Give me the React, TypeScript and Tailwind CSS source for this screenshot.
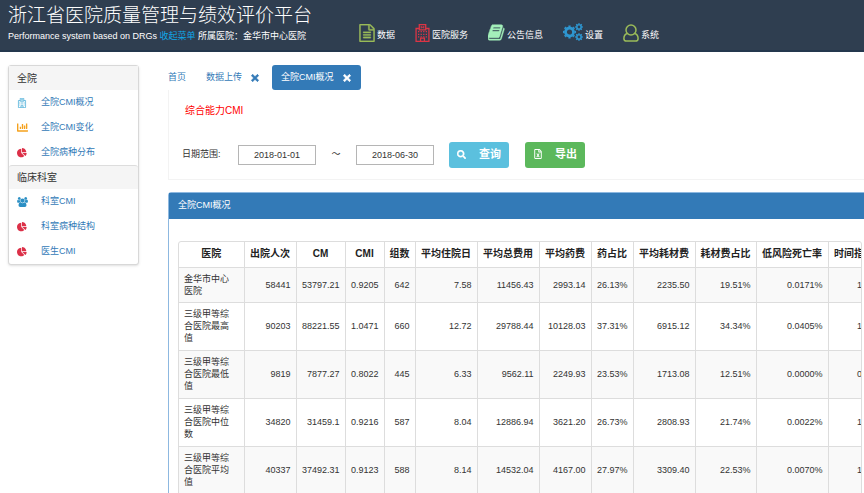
import React from 'react';
import { FaChartBar, FaRegFileExcel, FaSearch, FaTimes } from 'react-icons/fa';

type IconProps = { className?: string };

const FileTextIcon: React.FC<IconProps> = ({ className }) => (
  <svg viewBox="128 0 1536 1792" fill="currentColor" stroke="currentColor" strokeWidth="30" className={className} aria-hidden="true">
    <path d="M1596 380q28 28 48 76t20 88v1152q0 40-28 68t-68 28h-1344q-40 0-68-28t-28-68v-1600q0-40 28-68t68-28h896q40 0 88 20t76 48zm-444-244v376h376q-10-29-22-41l-313-313q-12-12-41-22zm384 1528v-1024h-416q-40 0-68-28t-28-68v-416h-768v1536h1280zm-1024-864q0-14 9-23t23-9h704q14 0 23 9t9 23v64q0 14-9 23t-23 9h-704q-14 0-23-9t-9-23v-64zm736 224q14 0 23 9t9 23v64q0 14-9 23t-23 9h-704q-14 0-23-9t-9-23v-64q0-14 9-23t23-9h704zm0 256q14 0 23 9t9 23v64q0 14-9 23t-23 9h-704q-14 0-23-9t-9-23v-64q0-14 9-23t23-9h704z" />
  </svg>
);

const HospitalIcon: React.FC<IconProps> = ({ className }) => (
  <svg viewBox="0 0 22 28" fill="none" stroke="currentColor" strokeWidth="2" className={className} aria-hidden="true">
    <path d="M6 7H1v20h20V7h-5" />
    <path d="M6 9V1h10v8z" />
    <path d="M9 3v4M13 3v4M9 5h4" strokeWidth="1.500" />
    <path d="M8 27v-5h6v5" />
    <path d="M4 12h2M8 12h2M12 12h2M16 12h2M4 16h2M8 16h2M12 16h2M16 16h2M4 20h2M8 20h2M12 20h2M16 20h2" />
  </svg>
);

const BookIcon: React.FC<IconProps> = ({ className }) => (
  <svg viewBox="64 64 1664 1664" fill="currentColor" stroke="currentColor" strokeWidth="40" className={className} aria-hidden="true">
    <path d="M1639 478q40 57 18 129l-275 906q-19 64-76.5 107.5t-122.5 43.5h-923q-77 0-148.5-53.5t-99.5-131.5q-24-67-2-127 0-4 3-27t4-37q1-8-3-21.5t-3-19.5q2-11 8-21t16.5-23.5 16.5-23.5q23-38 45-91.5t30-91.5q3-10 .5-30t-.5-28q3-11 17-28t17-23q21-36 42-92t25-90q1-9-2.5-32t.5-28q4-13 22-30.5t22-22.5q19-26 42.5-84.5t27.5-96.5q1-8-3-25.500t-2-26.500q2-8 9-18t18-23 17-21q8-12 16.5-30.5t15-35 16-36 19.500-32 26.500-23.500 36-11.500 47.500 5.500l-1 3q38-9 51-9h761q74 0 114 56t18 130l-274 906q-36 119-71.500 153.500t-128.500 34.500h-869q-27 0-38 15-11 16-1 43 24 70 144 70h923q29 0 56-15.500t35-41.500l300-987q7-22 5-57 38 15 59 43zm-1064 2q-4 13 2 22.500t20 9.500h608q13 0 25.500-9.500t16.500-22.500l21-64q4-13-2-22.500t-20-9.500h-608q-13 0-25.500 9.500t-16.500 22.500zm-83 256q-4 13 2 22.500t20 9.500h608q13 0 25.500-9.500t16.500-22.500l21-64q4-13-2-22.500t-20-9.500h-608q-13 0-25.500 9.500t-16.500 22.500z" />
  </svg>
);

const CogsIcon: React.FC<IconProps> = ({ className }) => (
  <svg viewBox="0 0 20 18" fill="none" stroke="currentColor" className={className} aria-hidden="true">
    <circle cx="6.500" cy="9" r="4" strokeWidth="2.800" />
    <circle cx="6.500" cy="9" r="5.800" strokeWidth="1.600" pathLength="16" strokeDasharray="1 1" strokeDashoffset="0.500" />
    <circle cx="16" cy="4" r="2.200" strokeWidth="1.600" />
    <circle cx="16" cy="4" r="3.300" strokeWidth="1.200" pathLength="16" strokeDasharray="1 1" strokeDashoffset="0.500" />
    <circle cx="16" cy="14" r="2.200" strokeWidth="1.600" />
    <circle cx="16" cy="14" r="3.300" strokeWidth="1.200" pathLength="16" strokeDasharray="1 1" strokeDashoffset="0.500" />
  </svg>
);

const UserIcon: React.FC<IconProps> = ({ className }) => (
  <svg viewBox="0 0 16 18" fill="none" stroke="currentColor" strokeWidth="1.500" className={className} aria-hidden="true">
    <circle cx="8" cy="6" r="5" />
    <path d="M4.300 9.500C1.800 10.300.9 12.300.9 14.500c0 1.600 1.100 2.600 2.600 2.600h9c1.500 0 2.600-1 2.600-2.600 0-2.200-.9-4.200-3.400-5" />
  </svg>
);

const UsersIcon: React.FC<IconProps> = ({ className }) => (
  <svg viewBox="0 0 1920 1792" fill="currentColor" className={className} aria-hidden="true">
    <path d="M593 896q-162 5-265 128h-134q-82 0-138-40.5t-56-118.5q0-353 124-353 6 0 43.500 21t97.500 42.500 119 21.500q67 0 133-23-5 37-5 66 0 159 93 286zm1071 637q0 120-73 189.500t-194 69.500h-874q-121 0-194-69.500t-73-189.500q0-53 3.500-103.500t14-109 26.500-108.500 43-97.500 62-81 85.500-53.500 111.500-20q10 0 43 21.500t73 48 107 48 135 21.500 135-21.500 107-48 73-48 43-21.500q61 0 111.500 20t85.500 53.500 62 81 43 97.500 26.500 108.500 14 109 3.500 103.500zm-1024-1277q0 106-75 181t-181 75-181-75-75-181 75-181 181-75 181 75 75 181zm704 384q0 159-112.500 271.500t-271.500 112.500-271.500-112.500-112.500-271.500 112.500-271.500 271.500-112.500 271.500 112.500 112.500 271.500zm576 225q0 78-56 118.500t-138 40.500h-134q-103-123-265-128 93-127 93-286 0-29-5-66 66 23 133 23 59 0 119-21.500t97.500-42.500 43.500-21q124 0 124 353zm-128-609q0 106-75 181t-181 75-181-75-75-181 75-181 181-75 181 75 75 181z" />
  </svg>
);

const PieIcon: React.FC<IconProps> = ({ className }) => (
  <svg viewBox="0 0 1792 1792" fill="currentColor" className={className} aria-hidden="true">
    <path d="M768 890l546 546q-106 108-247.500 168t-298.500 60q-209 0-385.500-103t-279.500-279.500-103-385.500 103-385.500 279.500-279.500 385.500-103v762zm187 6h773q0 157-60 298.500t-168 247.500zm709-128h-768v-768q209 0 385.500 103t279.500 279.500 103 385.500z" />
  </svg>
);

const navItems = [
  { label: '数据', icon: <FileTextIcon className="h-[18px] w-4 text-[#9bbb59]" /> },
  { label: '医院服务', icon: <HospitalIcon className="h-[18px] w-[15px] text-[#dc3545]" /> },
  { label: '公告信息', icon: <BookIcon className="mb-px h-[17px] w-[17px] text-[#a3efba]" /> },
  { label: '设置', icon: <CogsIcon className="mb-px h-[18px] w-5 text-[#2e96d0]" /> },
  { label: '系统', icon: <UserIcon className="h-[18px] w-4 text-[#9bbb59]" /> },
];

const menuGroups = [
  {
    title: '全院',
    items: [
      { label: '全院CMI概况', icon: <HospitalIcon className="h-[10px] w-[10px] text-[#41a9d6]" /> },
      { label: '全院CMI变化', icon: <FaChartBar className="h-[11px] w-[11px] text-[#f5a11d]" /> },
      { label: '全院病种分布', icon: <PieIcon className="h-[10px] w-[10px] text-[#dc3048]" /> },
    ],
  },
  {
    title: '临床科室',
    items: [
      { label: '科室CMI', icon: <UsersIcon className="h-[10px] w-[11px] text-[#2b8fc4]" /> },
      { label: '科室病种结构', icon: <PieIcon className="h-[10px] w-[10px] text-[#dc3048]" /> },
      { label: '医生CMI', icon: <PieIcon className="h-[10px] w-[10px] text-[#dc3048]" /> },
    ],
  },
];

const columns = [
  { title: '医院', width: 'w-[65px]' },
  { title: '出院人次', width: 'w-[52px]' },
  { title: 'CM', width: 'w-[49px]' },
  { title: 'CMI', width: 'w-[39px]' },
  { title: '组数', width: 'w-[31px]' },
  { title: '平均住院日', width: 'w-[62px]' },
  { title: '平均总费用', width: 'w-[62px]' },
  { title: '平均药费', width: 'w-[52px]' },
  { title: '药占比', width: 'w-[42px]' },
  { title: '平均耗材费', width: 'w-[62px]' },
  { title: '耗材费占比', width: 'w-[61px]' },
  { title: '低风险死亡率', width: 'w-[72px]' },
  { title: '时间指数', width: 'w-[52px]' },
];

const rows = [
  ['金华市中心医院', '58441', '53797.21', '0.9205', '642', '7.58', '11456.43', '2993.14', '26.13%', '2235.50', '19.51%', '0.0171%', '1.00'],
  ['三级甲等综合医院最高值', '90203', '88221.55', '1.0471', '660', '12.72', '29788.44', '10128.03', '37.31%', '6915.12', '34.34%', '0.0405%', '1.00'],
  ['三级甲等综合医院最低值', '9819', '7877.27', '0.8022', '445', '6.33', '9562.11', '2249.93', '23.53%', '1713.08', '12.51%', '0.0000%', '0.00'],
  ['三级甲等综合医院中位数', '34820', '31459.1', '0.9216', '587', '8.04', '12886.94', '3621.20', '26.73%', '2808.93', '21.74%', '0.0022%', '1.00'],
  ['三级甲等综合医院平均值', '40337', '37492.31', '0.9123', '588', '8.14', '14532.04', '4167.00', '27.97%', '3309.40', '22.53%', '0.0070%', '1.00'],
];

const Header: React.FC = () => (
  <header className="flex h-[52px] border-b-2 border-[#24384e] bg-[#2f3e50] pl-2 text-white">
    <div className="w-[351px] shrink-0">
      <h1 className="pt-1 text-[19px] leading-6 font-light whitespace-nowrap">浙江省医院质量管理与绩效评价平台</h1>
      <p className="pt-0.5 text-[9px] leading-3 whitespace-nowrap">
        Performance system based on DRGs{' '}
        <button type="button" className="text-[#10a8e8]">收起菜单</button>{' '}
        所属医院：金华市中心医院
      </p>
    </div>
    <nav className="flex h-[42px] items-end gap-5">
      {navItems.map((item) => (
        <a key={item.label} href="#" className="flex items-end gap-0.5 text-[9px] leading-[14px] whitespace-nowrap">
          {item.icon}
          <span>{item.label}</span>
        </a>
      ))}
    </nav>
  </header>
);

const Sidebar: React.FC = () => (
  <aside className="w-[131px] shrink-0 self-start rounded-[3px] border border-[#d8d8d8] bg-white shadow-sm">
    {menuGroups.map((group, index) => (
      <section key={group.title}>
        <h2
          className={`flex h-6 items-center bg-[#f5f5f5] px-2 text-[10px] text-[#333] ${
            index > 0 ? 'rounded-t-[3px] border-t border-[#ddd]' : ''
          }`}
        >
          {group.title}
        </h2>
        <ul>
          {group.items.map((item) => (
            <li key={item.label}>
              <a href="#" className="flex h-[25px] items-center px-2 text-[9px] text-[#337ab7]">
                <span className="flex w-6 shrink-0">{item.icon}</span>
                {item.label}
              </a>
            </li>
          ))}
        </ul>
      </section>
    ))}
  </aside>
);

const Tabs: React.FC = () => (
  <div className="flex h-[25px] items-center text-[9px] text-[#337ab7]">
    <a href="#">首页</a>
    <div className="ml-5 flex items-center gap-2">
      <a href="#">数据上传</a>
      <button type="button" aria-label="关闭数据上传">
        <FaTimes className="h-[10px] w-[10px]" strokeWidth="40" stroke="currentColor" />
      </button>
    </div>
    <div className="ml-3 flex h-full items-center gap-2 rounded-[3px] bg-[#337ab7] px-[9px] text-white">
      <a href="#">全院CMI概况</a>
      <button type="button" aria-label="关闭全院CMI概况">
        <FaTimes className="h-[10px] w-[10px]" strokeWidth="40" stroke="currentColor" />
      </button>
    </div>
  </div>
);

const FilterBar: React.FC = () => (
  <form className="border-b border-l border-[#f3f3f3] px-[13px] pt-3 pb-[11px] text-[9px] text-[#333]">
    <h2 className="px-[3px] text-[10px] leading-[18px] text-[#ff0000]">综合能力CMI</h2>
    <div className="mt-[22px] flex h-[26px] items-center">
      <label htmlFor="start-date" className="w-14 shrink-0">日期范围:</label>
      <input
        id="start-date"
        type="text"
        defaultValue="2018-01-01"
        className="h-5 w-[78px] border border-[#b5b5b5] text-center"
      />
      <label htmlFor="end-date" className="w-10 shrink-0 text-center">～</label>
      <input
        id="end-date"
        type="text"
        defaultValue="2018-06-30"
        className="h-5 w-[78px] border border-[#b5b5b5] text-center"
      />
      <button
        type="button"
        className="ml-[15px] flex h-[26px] w-[60px] items-center justify-between rounded-[3px] bg-[#5bc0de] px-2 pb-0.5 text-[11px] font-bold text-white"
      >
        <FaSearch className="h-[9px] w-[9px]" stroke="currentColor" strokeWidth="20" />
        查询
      </button>
      <button
        type="button"
        className="ml-4 flex h-[26px] w-[60px] items-center justify-between rounded-[3px] bg-[#5cb85c] px-2 pb-0.5 text-[11px] font-bold text-white"
      >
        <FaRegFileExcel className="h-[10px] w-[10px]" />
        导出
      </button>
    </div>
  </form>
);

const CmiTable: React.FC = () => (
  <div className="overflow-hidden rounded-t-[3px] border border-[#ddd]">
    <table className="w-[701px] table-fixed border-collapse text-[9px] leading-3 text-[#333]">
      <thead>
        <tr className="h-[25px]">
          {columns.map((col) => (
            <th
              key={col.title}
              scope="col"
              className={`${col.width} border-r border-b border-[#ddd] text-[10px] font-bold whitespace-nowrap text-[#222]`}
            >
              {col.title}
            </th>
          ))}
        </tr>
      </thead>
      <tbody>
        {rows.map(([name, ...values], index) => (
          <tr key={name} className={`odd:bg-[#f9f9f9] ${index === 0 ? 'h-[35px]' : 'h-12'}`}>
            <th scope="row" className="border-r border-b border-[#ddd] px-[5px] text-left font-normal">
              <span className="block w-[50px]">{name}</span>
            </th>
            {values.map((value, i) => (
              <td key={columns[i + 1].title} className="border-r border-b border-[#ddd] px-[5px] text-right">
                {value}
              </td>
            ))}
          </tr>
        ))}
      </tbody>
    </table>
  </div>
);

const App: React.FC = () => (
  <div className="min-h-screen overflow-hidden bg-white font-['Liberation_Sans','Noto_Sans_CJK_SC',sans-serif]">
    <Header />
    <div className="flex gap-[29px] pt-[13px] pl-2">
      <Sidebar />
      <main className="-mr-2 min-w-0 flex-1">
        <Tabs />
        <FilterBar />
        <section className="mt-3 rounded-t-[3px] border border-[#8db8e0]">
          <h2 className="flex h-[26px] items-center bg-[#337ab7] px-[9px] text-[9px] text-white">全院CMI概况</h2>
          <div className="px-[9px] pt-[22px] pb-4">
            <CmiTable />
          </div>
        </section>
      </main>
    </div>
  </div>
);

export default App;
